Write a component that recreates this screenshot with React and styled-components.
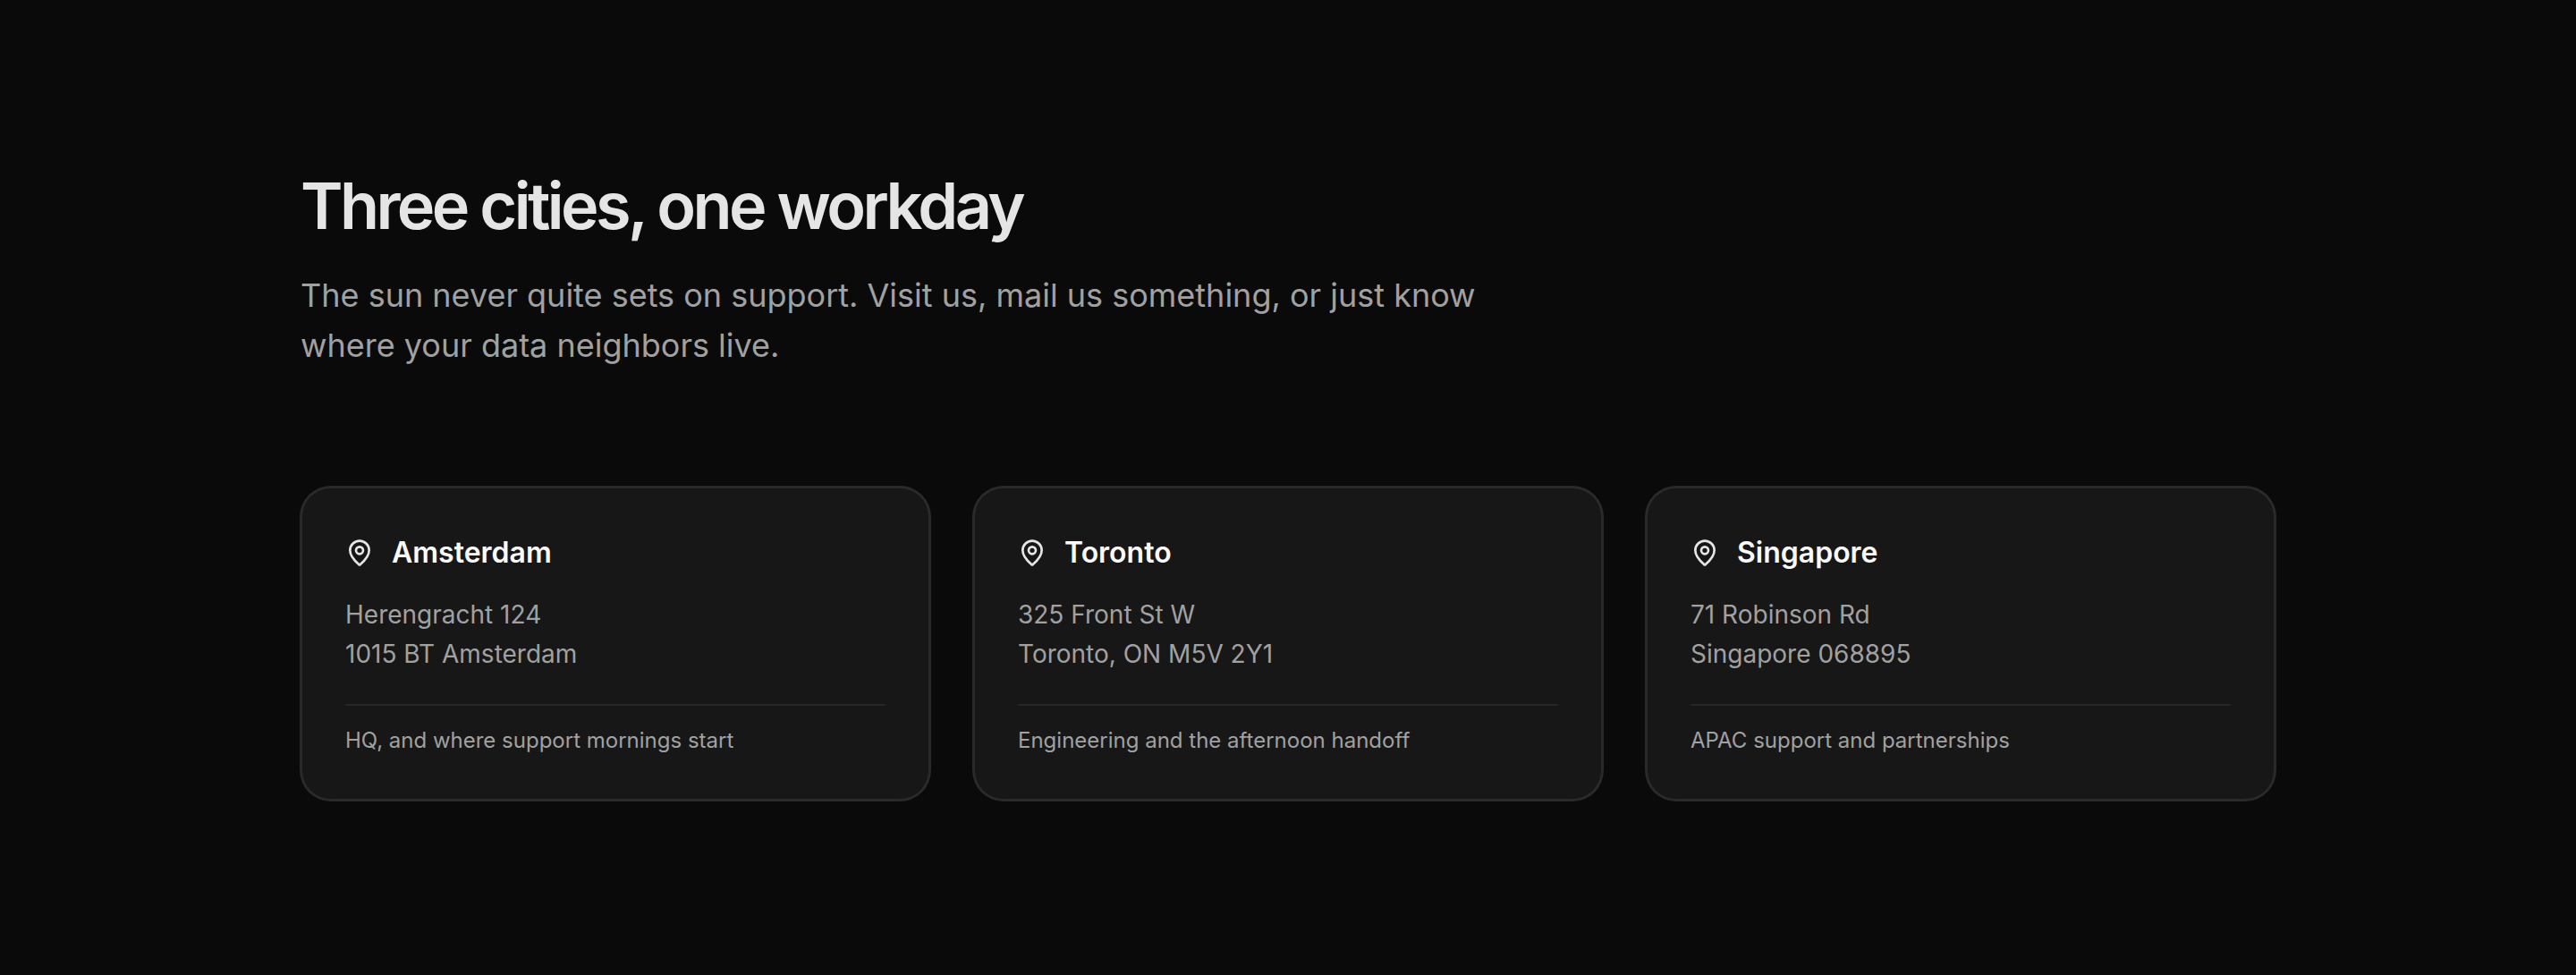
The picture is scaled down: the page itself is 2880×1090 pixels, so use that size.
import React from "react";
import styled, { createGlobalStyle } from "styled-components";
import { MapPin } from "lucide-react";

const GlobalStyle = createGlobalStyle`
  html, body {
    margin: 0;
    padding: 0;
    background: #0a0a0a;
  }
  body {
    font-family: Inter, "Liberation Sans", sans-serif;
  }
`;

const Section = styled.section`
  box-sizing: border-box;
  height: 1090px;
  padding: 190px 336px 0;
  background: #0a0a0a;
`;

const Title = styled.h2`
  margin: 0;
  font-size: 72px;
  line-height: 80px;
  font-weight: 600;
  letter-spacing: -3.6px;
  color: #e5e5e5;
`;

const Lead = styled.p`
  margin: 32px 0 0;
  max-width: 1344px;
  font-size: 36px;
  line-height: 56px;
  color: #a1a1a1;
`;

const Cards = styled.div`
  display: grid;
  grid-template-columns: repeat(3, 1fr);
  gap: 48px;
  margin-top: 130px;
`;

const Card = styled.article`
  box-sizing: border-box;
  padding: 48px;
  background: #171717;
  border: 2px solid #2a2a2a;
  border-radius: 34px;
  box-shadow: 0 0 0 1px #2a2a2a;
`;

const CityRow = styled.div`
  display: flex;
  align-items: center;
  gap: 20px;
  color: #e5e5e5;
`;

const CityName = styled.h3`
  margin: 0;
  font-size: 32px;
  line-height: 48px;
  font-weight: 600;
  color: #fafafa;
`;

const Address = styled.p`
  margin: 23px 0 0;
  font-size: 28px;
  line-height: 44px;
  color: #a1a1a1;
`;

const Note = styled.p`
  margin: 34px 0 0;
  padding-top: 22px;
  border-top: 2px solid #262626;
  font-size: 24px;
  line-height: 34px;
  color: #a1a1a1;
`;

const offices = [
  {
    city: "Amsterdam",
    lines: ["Herengracht 124", "1015 BT Amsterdam"],
    note: "HQ, and where support mornings start",
  },
  {
    city: "Toronto",
    lines: ["325 Front St W", "Toronto, ON M5V 2Y1"],
    note: "Engineering and the afternoon handoff",
  },
  {
    city: "Singapore",
    lines: ["71 Robinson Rd", "Singapore 068895"],
    note: "APAC support and partnerships",
  },
];

export default function App() {
  return (
    <>
      <GlobalStyle />
      <Section>
        <Title>Three cities, one workday</Title>
        <Lead>
          The sun never quite sets on support. Visit us, mail us something, or
          just know where your data neighbors live.
        </Lead>
        <Cards>
          {offices.map((office) => (
            <Card key={office.city}>
              <CityRow>
                <MapPin size={32} strokeWidth={2} />
                <CityName>{office.city}</CityName>
              </CityRow>
              <Address>
                {office.lines[0]}
                <br />
                {office.lines[1]}
              </Address>
              <Note>{office.note}</Note>
            </Card>
          ))}
        </Cards>
      </Section>
    </>
  );
}
